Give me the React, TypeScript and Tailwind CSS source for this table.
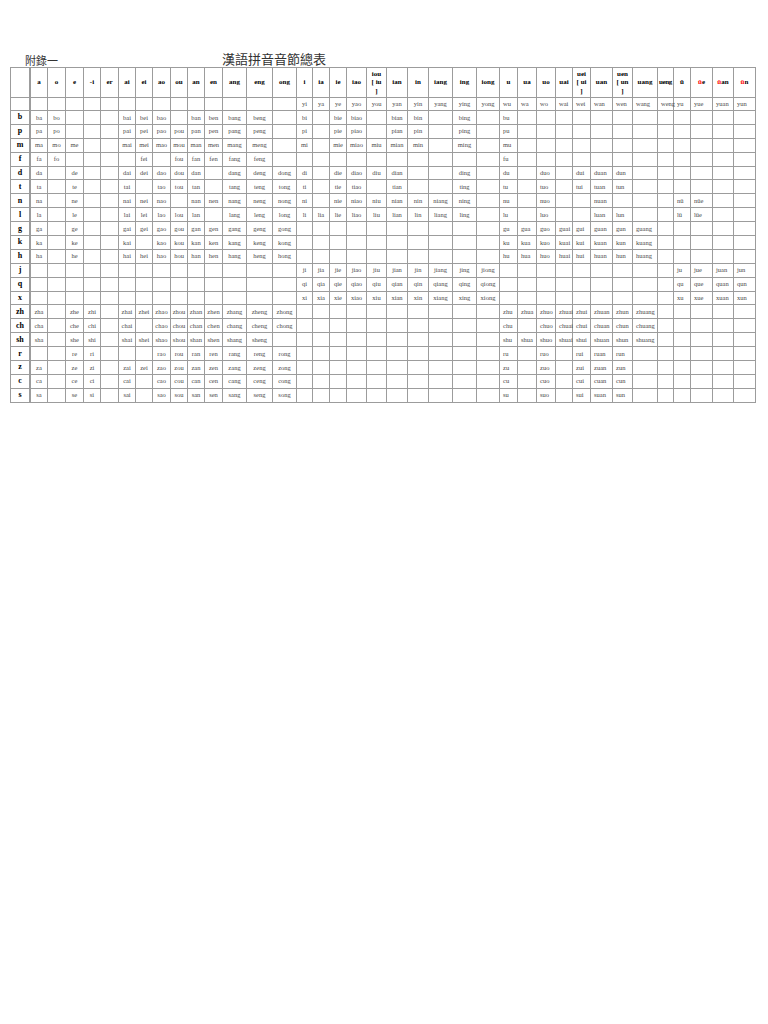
import * as React from "react";

const cols = [
  "a", "o", "e", "-i", "er", "ai", "ei", "ao", "ou", "an", "en", "ang", "eng", "ong",
  "i", "ia", "ie", "iao", "iou", "ian", "in", "iang", "ing", "iong",
  "u", "ua", "uo", "uai", "uei", "uan", "uen", "uang", "ueng",
  "ü", "üe", "üan", "ün",
];

const blank14 = ". . . . . . . . . . . . . .";
const blank9 = ". . . . . . . . .";

// "." = empty cell, rows padded to 37 columns
const rows: [string, string][] = [
  ["", blank14 + " yi ya ye yao you yan yin yang ying yong wu wa wo wai wei wan wen wang weng yu yue yuan yun"],
  ["b", "ba bo . . . bai bei bao . ban ben bang beng . bi . bie biao . bian bin . bing . bu"],
  ["p", "pa po . . . pai pei pao pou pan pen pang peng . pi . pie piao . pian pin . ping . pu"],
  ["m", "ma mo me . . mai mei mao mou man men mang meng . mi . mie miao miu mian min . ming . mu"],
  ["f", "fa fo . . . . fei . fou fan fen fang feng . . . . . . . . . . . fu"],
  ["d", "da . de . . dai dei dao dou dan . dang deng dong di . die diao diu dian . . ding . du . duo . dui duan dun"],
  ["t", "ta . te . . tai . tao tou tan . tang teng tong ti . tie tiao . tian . . ting . tu . tuo . tui tuan tun"],
  ["n", "na . ne . . nai nei nao . nan nen nang neng nong ni . nie niao niu nian nin niang ning . nu . nuo . . nuan . . . nü nüe"],
  ["l", "la . le . . lai lei lao lou lan . lang leng long li lia lie liao liu lian lin liang ling . lu . luo . . luan lun . . lü lüe"],
  ["g", "ga . ge . . gai gei gao gou gan gen gang geng gong . . . . . . . . . . gu gua guo guai gui guan gun guang"],
  ["k", "ka . ke . . kai . kao kou kan ken kang keng kong . . . . . . . . . . ku kua kuo kuai kui kuan kun kuang"],
  ["h", "ha . he . . hai hei hao hou han hen hang heng hong . . . . . . . . . . hu hua huo huai hui huan hun huang"],
  ["j", blank14 + " ji jia jie jiao jiu jian jin jiang jing jiong " + blank9 + " ju jue juan jun"],
  ["q", blank14 + " qi qia qie qiao qiu qian qin qiang qing qiong " + blank9 + " qu que quan qun"],
  ["x", blank14 + " xi xia xie xiao xiu xian xin xiang xing xiong " + blank9 + " xu xue xuan xun"],
  ["zh", "zha . zhe zhi . zhai zhei zhao zhou zhan zhen zhang zheng zhong . . . . . . . . . . zhu zhua zhuo zhuai zhui zhuan zhun zhuang"],
  ["ch", "cha . che chi . chai . chao chou chan chen chang cheng chong . . . . . . . . . . chu . chuo chuai chui chuan chun chuang"],
  ["sh", "sha . she shi . shai shei shao shou shan shen shang sheng . . . . . . . . . . . shu shua shuo shuai shui shuan shun shuang"],
  ["r", ". . re ri . . . rao rou ran ren rang reng rong . . . . . . . . . . ru . ruo . rui ruan run"],
  ["z", "za . ze zi . zai zei zao zou zan zen zang zeng zong . . . . . . . . . . zu . zuo . zui zuan zun"],
  ["c", "ca . ce ci . cai . cao cou can cen cang ceng cong . . . . . . . . . . cu . cuo . cui cuan cun"],
  ["s", "sa . se si . sai . sao sou san sen sang seng song . . . . . . . . . . su . suo . sui suan sun"],
];

function parseRow(s: string) {
  const parts = s.split(" ");
  while (parts.length < 37) parts.push(".");
  return parts.map((p) => (p === "." ? "" : p));
}

function HeaderLabel({ name }: { name: string }) {
  if (name === "iou" || name === "uei" || name === "uen") {
    const alt = name === "iou" ? "iu" : name === "uei" ? "ui" : "un";
    return (
      <div className="flex flex-col items-center leading-[8.5px]">
        <span>{name}</span>
        <span>[ {alt}</span>
        <span>]</span>
      </div>
    );
  }
  if (name.startsWith("ü") && name.length > 1) {
    return (
      <span>
        <span className="text-[#ff0000]">ü</span>
        {name.slice(1)}
      </span>
    );
  }
  return <span className={name === "ueng" ? "tracking-[-0.4px]" : ""}>{name}</span>;
}

const cell = "border-r border-b border-[#9c9c9c] flex items-center overflow-visible whitespace-nowrap";

export default function App() {
  return (
    <div className="min-h-[1024px] w-[768px] bg-white font-['Liberation_Serif',serif]">
      <div className="pt-[50px] pl-[10px]">
        {/* Title */}
        <div className="flex items-end h-[17px] font-['Noto_Sans_CJK_TC','Noto_Sans_CJK_SC',sans-serif] text-[#333]">
          <span className="ml-[15px] text-[11px] leading-[14px]">附錄一</span>
          <span className="ml-[164px] text-[13px] leading-[16px]">漢語拼音音節總表</span>
        </div>

        {/* Table */}
        <div className="grid w-[746px] border-t border-l border-[#9c9c9c] grid-cols-[20px_17px_18px_18px_17px_18px_17px_17px_18px_17px_17px_18px_24px_26px_24px_16px_17px_17px_20px_20px_21px_21px_24px_24px_23px_18px_19px_19px_17px_18px_22px_20px_25px_16px_17px_22px_21px_22px] grid-rows-[30px_13px_repeat(21,13.9px)]">
          {/* header row */}
          <div className={cell + " border-r-2"} />
          {cols.map((c) => (
            <div key={"h-" + c} className={cell + " justify-center text-[7px] font-bold text-black"}>
              <HeaderLabel name={c} />
            </div>
          ))}

          {rows.map(([init, data], ri) => {
            const vals = parseRow(data);
            return (
              <React.Fragment key={"r" + ri}>
                <div className={cell + " border-r-2 justify-center text-[8px] font-bold text-black"}>{init}</div>
                {vals.map((v, ci) => (
                  <div
                    key={ri + "-" + ci}
                    className={
                      cell +
                      " text-[6.5px] text-[#4a4a4a] " +
                      (ci >= 24 ? "justify-start pl-[3px]" : "justify-center")
                    }
                  >
                    {v}
                  </div>
                ))}
              </React.Fragment>
            );
          })}
        </div>
      </div>
    </div>
  );
}
